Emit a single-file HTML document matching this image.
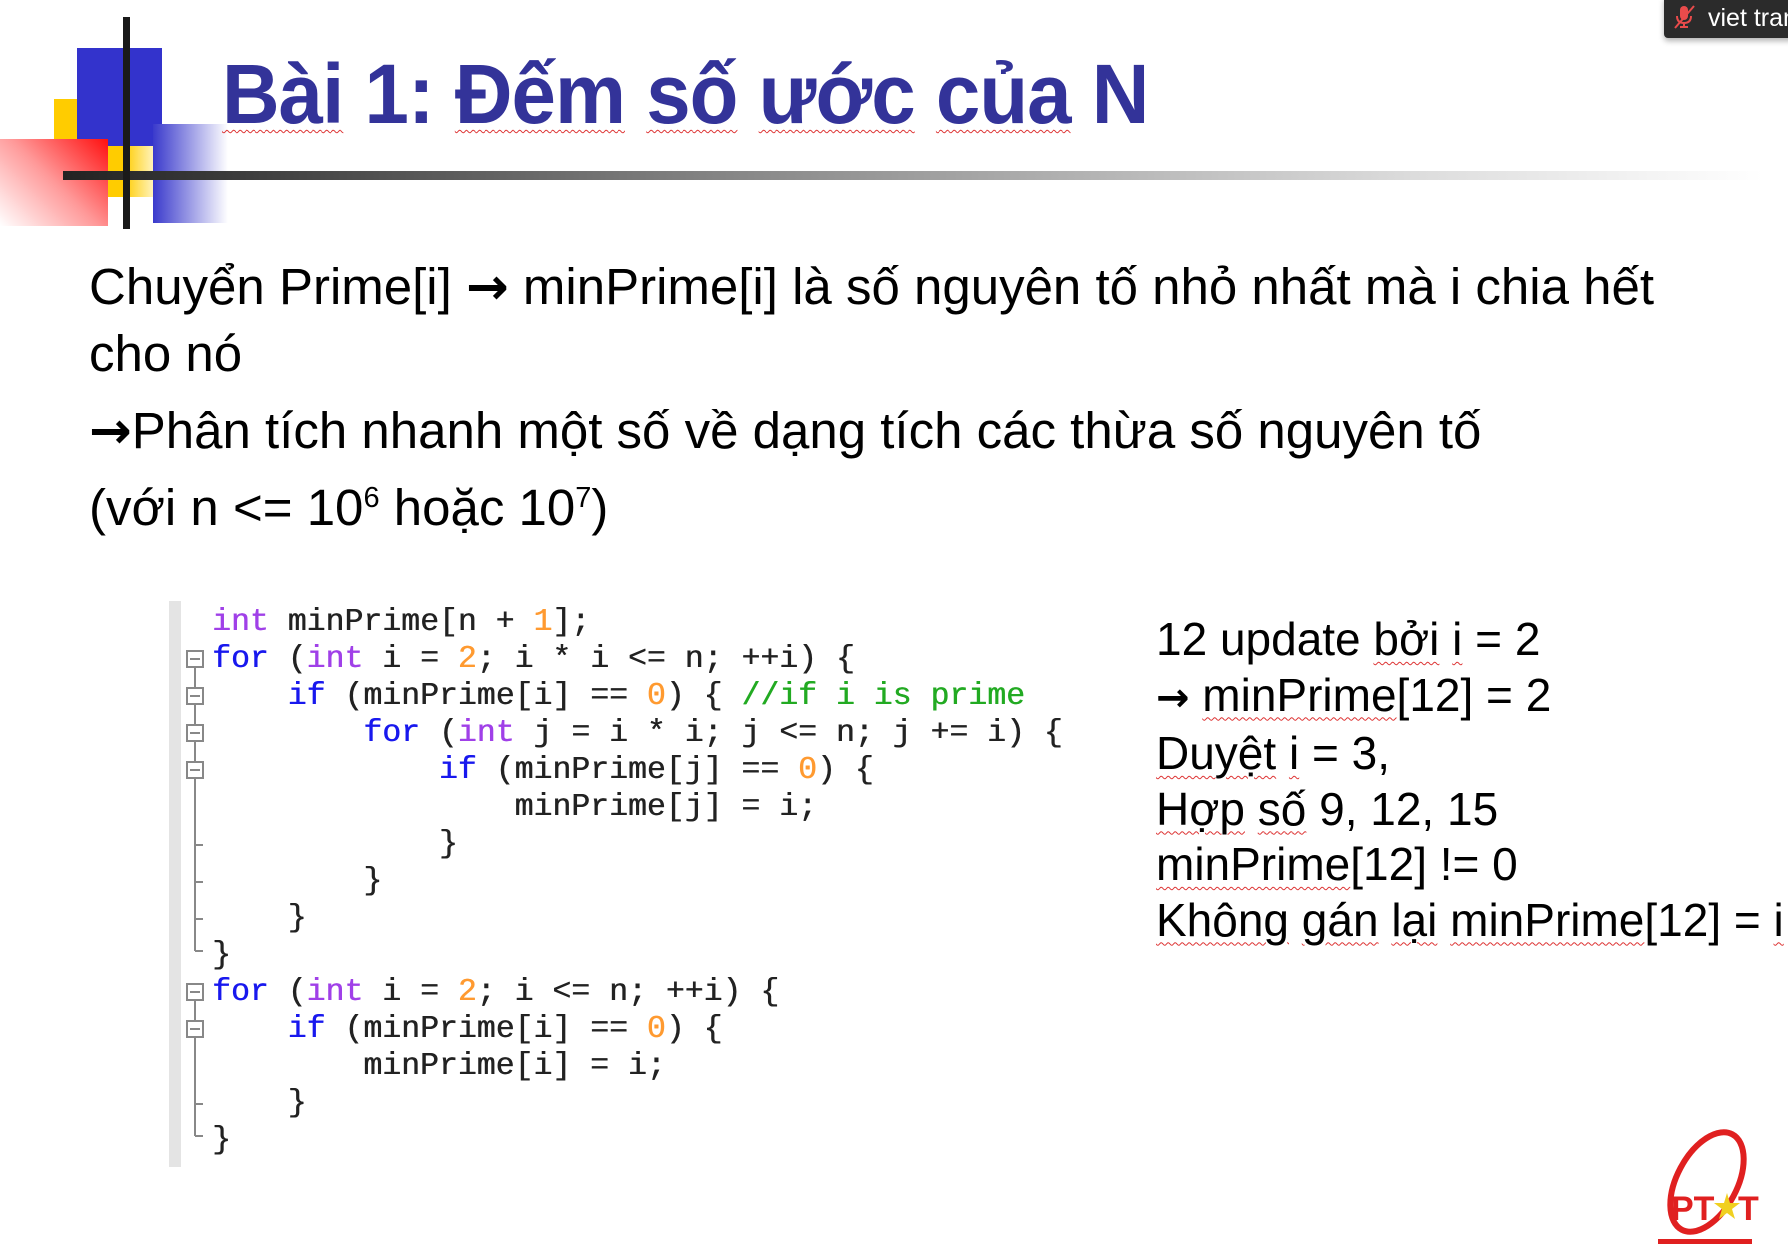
<!DOCTYPE html>
<html><head><meta charset="utf-8"><style>
*{margin:0;padding:0;box-sizing:border-box}
body{width:1788px;height:1246px;background:#fff;position:relative;overflow:hidden;font-family:"Liberation Sans",sans-serif}
.a{position:absolute}
.title{left:222px;top:46px;font-size:84px;font-weight:bold;color:#333399;white-space:nowrap;transform-origin:left top;transform:scaleX(0.95);letter-spacing:-1px}
.body{left:89px;font-size:51px;color:#000;white-space:nowrap;line-height:1}
.ar{font-family:"DejaVu Sans",sans-serif;font-weight:bold}
.code{font-family:"Liberation Mono",monospace;font-size:31.5px;white-space:pre;color:#222;left:212px;line-height:37px;top:604px;text-shadow:0.5px 0 0 currentColor}
.k{color:#1818ee}.t{color:#a040e8}.n{color:#ff9a30}.c{color:#22aa22}
.r{left:1156px;font-size:46px;color:#000;white-space:nowrap;line-height:55.5px;top:612px}
.u{text-decoration:underline wavy #d33;text-decoration-thickness:1px;text-underline-offset:6px}
</style></head><body>
<!-- decorations -->
<div class="a" style="left:54px;top:99px;width:100px;height:98px;background:linear-gradient(90deg,#ffcc00 70%,#fff4c0)"></div>
<div class="a" style="left:77px;top:48px;width:85px;height:98px;background:#3333cc"></div>
<div class="a" style="left:0;top:139px;width:108px;height:87px;background:linear-gradient(225deg,#ff1010,#ff9a9a 50%,#fff)"></div>
<div class="a" style="left:153px;top:124px;width:75px;height:99px;background:linear-gradient(90deg,#3a3acc,#fff)"></div>
<div class="a" style="left:63px;top:171px;width:1700px;height:9px;background:linear-gradient(90deg,#222,#888 40%,#ddd 80%,#fff)"></div>
<div class="a" style="left:123px;top:17px;width:7px;height:212px;background:#1a1a1a"></div>
<div class="a title"><span class="u">Bài</span> 1: <span class="u">Đếm</span> <span class="u">số</span> <span class="u">ước</span> <span class="u">của</span> N</div>
<!-- badge -->
<div class="a" style="left:1664px;top:-4px;width:130px;height:42px;background:#2b2b2b;border-radius:4px;box-shadow:0 3px 6px rgba(0,0,0,.3)"></div>
<svg class="a" style="left:1672px;top:4px" width="26" height="26" viewBox="0 0 26 26"><rect x="8" y="2" width="8" height="14" rx="4" fill="#e94b4b"/><path d="M5 12q0 7 7 7q7 0 7-7M12 19v4M8 23h8" stroke="#e94b4b" stroke-width="2" fill="none"/><path d="M3 24L22 2" stroke="#e94b4b" stroke-width="2"/></svg>
<div class="a" style="left:1708px;top:4px;font-size:25px;color:#fff;white-space:nowrap">viet tran</div>
<!-- body text -->
<div class="a body" style="top:261px">Chuyển Prime[i] <span class="ar">→</span> minPrime[i] là số nguyên tố nhỏ nhất mà i chia hết</div>
<div class="a body" style="top:328px">cho nó</div>
<div class="a body" style="top:405px"><span class="ar">→</span>Phân tích nhanh một số về dạng tích các thừa số nguyên tố</div>
<div class="a body" style="top:482px">(với n &lt;= 10<sup style="font-size:29px">6</sup> hoặc 10<sup style="font-size:29px">7</sup>)</div>
<!-- code -->
<div class="a" style="left:169px;top:601px;width:12px;height:566px;background:#e4e4e4"></div>
<svg class="a" style="left:181px;top:601px" width="30" height="566">
<g stroke="#888" stroke-width="2" fill="#fff">
<line x1="14" y1="58" x2="14" y2="350"/><line x1="14" y1="350" x2="22" y2="350"/>
<line x1="14" y1="391" x2="14" y2="535"/><line x1="14" y1="535" x2="22" y2="535"/>
<line x1="14" y1="244" x2="22" y2="244"/><line x1="14" y1="281" x2="22" y2="281"/><line x1="14" y1="318" x2="22" y2="318"/><line x1="14" y1="503" x2="22" y2="503"/>
<rect x="6" y="50" width="16" height="16"/><rect x="6" y="87" width="16" height="16"/><rect x="6" y="124" width="16" height="16"/><rect x="6" y="161" width="16" height="16"/><rect x="6" y="383" width="16" height="16"/><rect x="6" y="420" width="16" height="16"/>
<g stroke-width="2"><line x1="9" y1="58" x2="19" y2="58"/><line x1="9" y1="95" x2="19" y2="95"/><line x1="9" y1="132" x2="19" y2="132"/><line x1="9" y1="169" x2="19" y2="169"/><line x1="9" y1="391" x2="19" y2="391"/><line x1="9" y1="428" x2="19" y2="428"/></g>
</g></svg>
<div class="a code"><span class="t">int</span> minPrime[n + <span class="n">1</span>];
<span class="k">for</span> (<span class="t">int</span> i = <span class="n">2</span>; i * i &lt;= n; ++i) {
    <span class="k">if</span> (minPrime[i] == <span class="n">0</span>) { <span class="c">//if i is prime</span>
        <span class="k">for</span> (<span class="t">int</span> j = i * i; j &lt;= n; j += i) {
            <span class="k">if</span> (minPrime[j] == <span class="n">0</span>) {
                minPrime[j] = i;
            }
        }
    }
}
<span class="k">for</span> (<span class="t">int</span> i = <span class="n">2</span>; i &lt;= n; ++i) {
    <span class="k">if</span> (minPrime[i] == <span class="n">0</span>) {
        minPrime[i] = i;
    }
}</div>
<!-- right text -->
<div class="a r">12 update <span class="u">bởi</span> <span class="u">i</span> = 2<br><span class="ar" style="font-size:40px">→</span> <span class="u">minPrime</span>[12] = 2<br><span class="u">Duyệt</span> <span class="u">i</span> = 3,<br><span class="u">Hợp</span> <span class="u">số</span> 9, 12, 15<br><span class="u">minPrime</span>[12] != 0<br><span class="u">Không</span> <span class="u">gán</span> <span class="u">lại</span> <span class="u">minPrime</span>[12] = <span class="u">i</span></div>
<!-- logo -->
<svg class="a" style="left:1655px;top:1120px" width="110" height="126" viewBox="0 0 110 126">
<ellipse cx="52" cy="62" rx="30" ry="54" transform="rotate(28 52 62)" fill="none" stroke="#e02020" stroke-width="6"/>
<text x="16" y="100" font-family="Liberation Sans" font-weight="bold" font-size="34" fill="#e02020">PT</text>
<text x="83" y="100" font-family="Liberation Sans" font-weight="bold" font-size="34" fill="#e02020">T</text>
<polygon points="72,73 75,83 85,83 77,89 80,99 72,93 64,99 67,89 59,83 69,83" fill="#f0d020"/>
<rect x="3" y="119" width="94" height="5" fill="#e02020"/>
</svg>
</body></html>
